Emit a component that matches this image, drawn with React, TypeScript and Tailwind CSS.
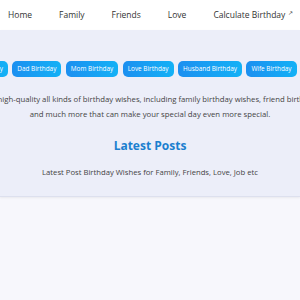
import React from 'react';

const NAV = ['Home', 'Family', 'Friends', 'Love', 'Calculate Birthday'];
const CHIPS = [
  'Brother Birthday',
  'Dad Birthday',
  'Mom Birthday',
  'Love Birthday',
  'Husband Birthday',
  'Wife Birthday',
  'Boss Birthday',
];

export default function App() {
  return (
    <div className="w-[300px] h-[300px] overflow-hidden bg-[#f7f7fc]" style={{ fontFamily: '"Open Sans", "Noto Sans", sans-serif' }}>
      {/* top nav */}
      <nav className="h-[30px] bg-white flex items-center pl-[8px] gap-[27px] text-[8.5px] text-[#333] whitespace-nowrap">
        {NAV.map((item, i) => (
          <span key={item} className="flex items-start">
            {item}
            {i === NAV.length - 1 && <span className="ml-[3px] text-[6px] leading-none mt-[1px]">↗</span>}
          </span>
        ))}
      </nav>

      {/* hero */}
      <section className="bg-[#eceef9] pt-[31px] pb-[18px] border-b border-[#dde0ee] shadow-[0_1px_2px_rgba(0,0,0,0.06)]">
        <div className="flex justify-center gap-[4.5px] whitespace-nowrap">
          {CHIPS.map(chip => (
            <span
              key={chip}
              className="shrink-0 h-[16px] px-[5px] flex items-center rounded-[5px] text-[6.4px] text-white bg-gradient-to-r from-[#1c8ff0] to-[#13b1f6]"
            >
              {chip}
            </span>
          ))}
        </div>

        <div className="flex justify-center mt-[15px]">
          <p className="shrink-0 text-center text-[7.75px] leading-[15px] text-[#444] whitespace-nowrap">
            We provide high-quality all kinds of birthday wishes, including family birthday wishes, friend birthday wishes,
            <br />
            and much more that can make your special day even more special.
          </p>
        </div>

        <h2 className="mt-[16px] text-center text-[12px] leading-[16px] font-bold text-[#1b7fcf]">Latest Posts</h2>
        <p className="mt-[13px] text-center text-[7.7px] leading-[11px] text-[#444]">
          Latest Post Birthday Wishes for Family, Friends, Love, Job etc
        </p>
      </section>
    </div>
  );
}
